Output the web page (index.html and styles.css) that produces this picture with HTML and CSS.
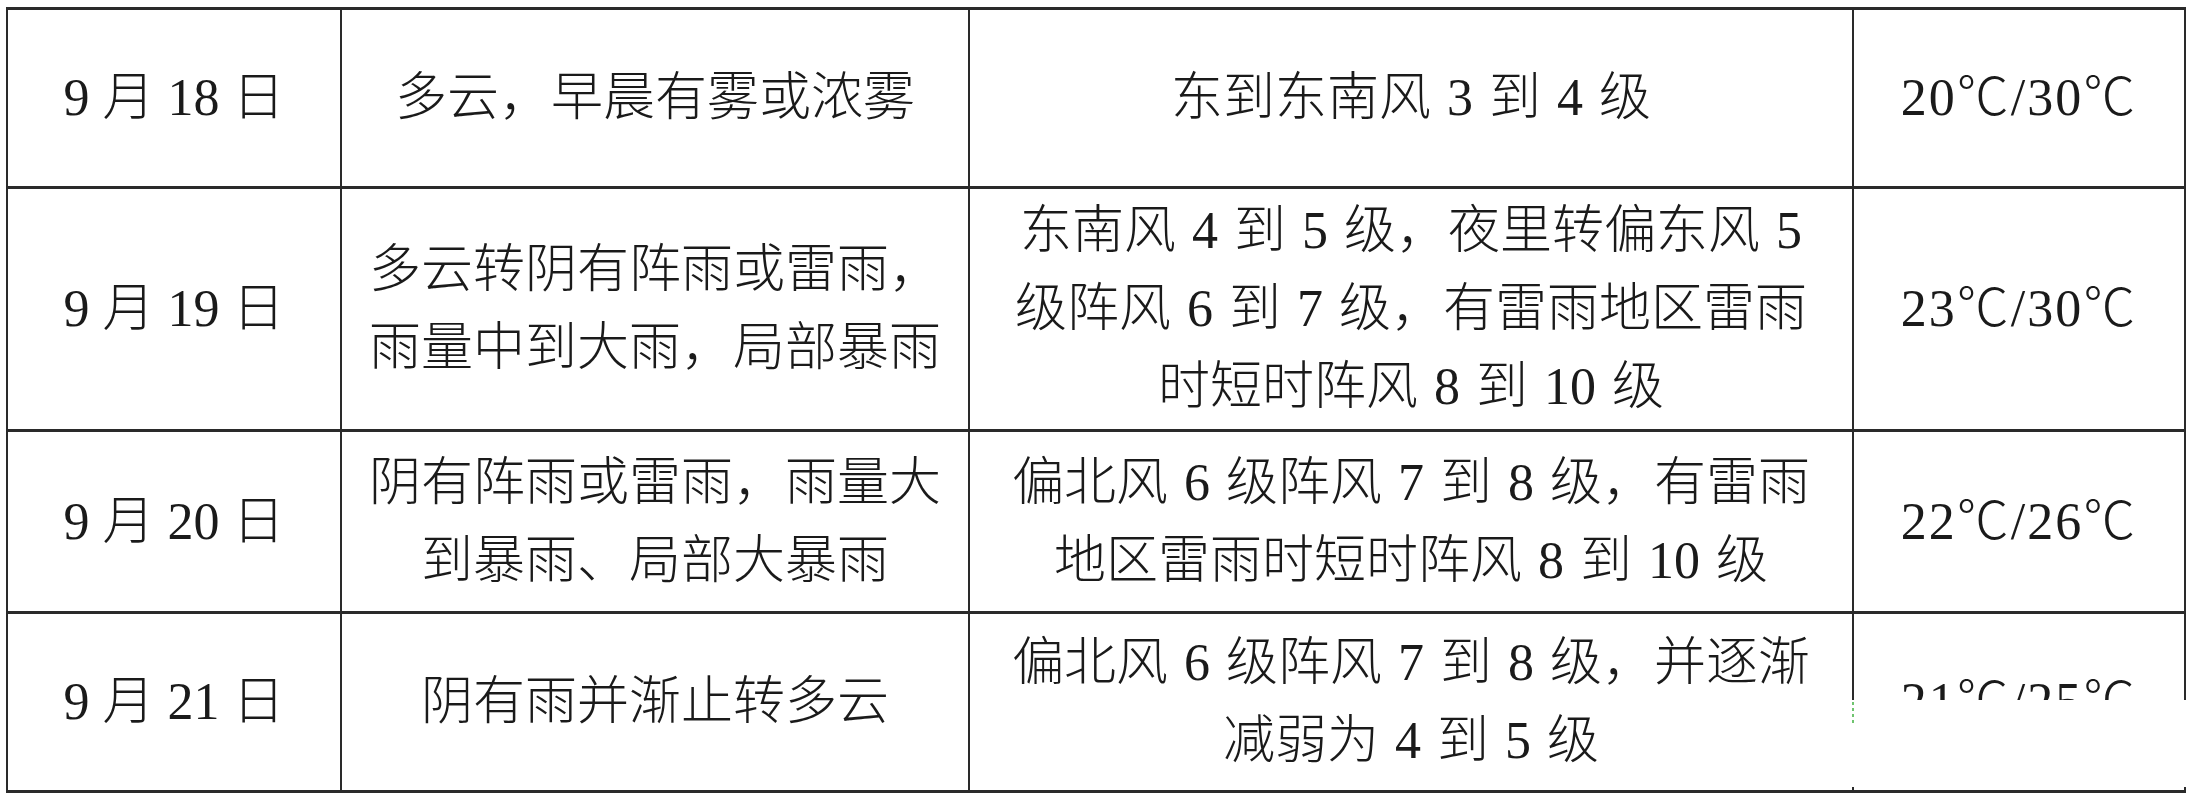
FILE: index.html
```html
<!DOCTYPE html>
<html lang="zh-CN">
<head>
<meta charset="utf-8">
<title>天气预报</title>
<link rel="stylesheet" href="styles.css">
</head>
<body>
<div class="table">
  <div class="cell r1">9 月 18 日</div>
  <div class="cell r1">多云，早晨有雾或浓雾</div>
  <div class="cell r1 wind">东到东南风 3 到 4 级</div>
  <div class="cell r1 temp">20℃/30℃</div>

  <div class="cell r2">9 月 19 日</div>
  <div class="cell r2">多云转阴有阵雨或雷雨，<br>雨量中到大雨，局部暴雨</div>
  <div class="cell r2 wind">东南风 4 到 5 级，夜里转偏东风 5<br>级阵风 6 到 7 级，有雷雨地区雷雨<br>时短时阵风 8 到 10 级</div>
  <div class="cell r2 temp">23℃/30℃</div>

  <div class="cell r3">9 月 20 日</div>
  <div class="cell r3">阴有阵雨或雷雨，雨量大<br>到暴雨、局部大暴雨</div>
  <div class="cell r3 wind">偏北风 6 级阵风 7 到 8 级，有雷雨<br>地区雷雨时短时阵风 8 到 10 级</div>
  <div class="cell r3 temp">22℃/26℃</div>

  <div class="cell r4">9 月 21 日</div>
  <div class="cell r4">阴有雨并渐止转多云</div>
  <div class="cell r4 wind">偏北风 6 级阵风 7 到 8 级，并逐渐<br>减弱为 4 到 5 级</div>
  <div class="cell r4 temp cut">21℃/25℃<span class="patch"><span class="speck"></span></span></div>
</div>
</body>
</html>
```

FILE: styles.css
```css
html, body {
  margin: 0;
  padding: 0;
  background: #ffffff;
}

body {
  padding: 7px 0 0 6px;
}

.table {
  display: grid;
  grid-template-columns: 332px 626px 882px 330px;
  grid-template-rows: 176px 240px 179px 176px;
  column-gap: 2px;
  row-gap: 3px;
  padding: 3px 2px;
  width: max-content;
  background: #2a2a2a;
}

.cell {
  position: relative;
  display: flex;
  align-items: center;
  justify-content: center;
  text-align: center;
  background: #ffffff;
  color: #1a1a1a;
  font-family: "Liberation Serif", "Noto Sans CJK SC", serif;
  font-size: 52px;
  font-weight: 300;
  line-height: 78px;
  white-space: nowrap;
}

.wind {
  word-spacing: 3px;
}

.temp {
  letter-spacing: 2px;
}

.patch {
  position: absolute;
  left: -2px;
  right: -2px;
  top: 86px;
  bottom: 3px;
  background: #ffffff;
}

.speck {
  position: absolute;
  left: 0;
  top: 2px;
  width: 2px;
  height: 22px;
  background: repeating-linear-gradient(to bottom, #6fc46f 0 3px, #ffffff 3px 6px);
}
```
